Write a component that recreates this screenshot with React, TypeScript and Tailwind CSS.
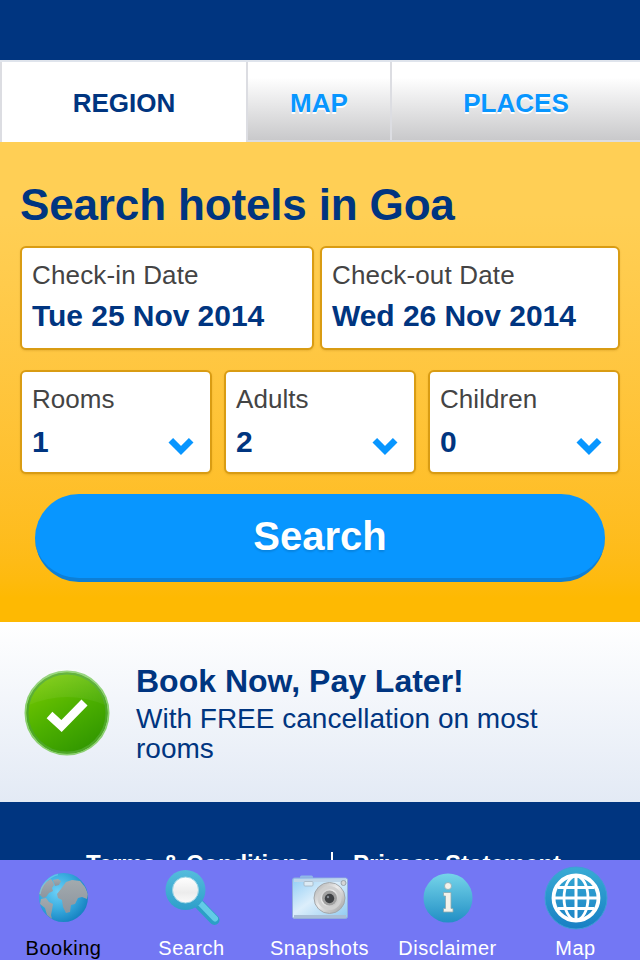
import React, { useState } from 'react';
import clsx from 'clsx';

const tabs = [
  { label: 'REGION', width: 'w-[246px]' },
  { label: 'MAP', width: 'w-[144px]' },
  { label: 'PLACES', width: 'w-[250px]' },
];

const GlobeIcon = () => (
  <svg width="64" height="64" viewBox="0 0 64 64">
    <defs>
      <radialGradient id="earth" cx="0.38" cy="0.38" r="0.68">
        <stop offset="0" stopColor="#6cd0f8" />
        <stop offset="0.5" stopColor="#3caee0" />
        <stop offset="1" stopColor="#1480c0" />
      </radialGradient>
      <linearGradient id="land" x1="0" y1="0" x2="0" y2="1">
        <stop offset="0" stopColor="#a3aaae" />
        <stop offset="1" stopColor="#8c959e" />
      </linearGradient>
      <clipPath id="earthClip">
        <circle cx="31.500" cy="31.500" r="24.500" />
      </clipPath>
    </defs>
    <circle cx="31.500" cy="31.500" r="24.500" fill="url(#earth)" />
    <g clipPath="url(#earthClip)" fill="url(#land)">
      <path d="M7 28l2-7 5-5 5-3 2 3 1 3-2 3 1 3-4 2-3 4-3 1-2-2z" />
      <path d="M21 14l5-1 3 2-2 4-4 1-1-3z" />
      <path d="M9 33l5-1 3 4 4 2-1 6-1 5 1 4-5-4-2-7-5-4z" />
      <path d="M29 23l5-7 6-2 8 1 5 6 3 7-1 5-5-2-4 1-3 6-4 1-1 7-4 1-3-6-1-7-4-2-1-4z" />
    </g>
    <path d="M8 28a24 24 0 0 1 18-19.500" stroke="#7fd4f2" strokeWidth="1.500" strokeOpacity="0.5" fill="none" />
  </svg>
);

const SearchIcon = () => (
  <svg width="64" height="64" viewBox="0 0 64 64">
    <defs>
      <linearGradient id="ring" x1="0" y1="0" x2="0" y2="1">
        <stop offset="0" stopColor="#55bcdc" />
        <stop offset="1" stopColor="#2e9fca" />
      </linearGradient>
      <linearGradient id="lens" x1="0" y1="0" x2="0" y2="1">
        <stop offset="0" stopColor="#fff" />
        <stop offset="0.6" stopColor="#ececec" />
        <stop offset="1" stopColor="#fafafa" />
      </linearGradient>
    </defs>
    <path d="M39 38l15.500 16" stroke="#2b9fc6" strokeWidth="10" strokeLinecap="round" />
    <path d="M40 37l15 15.500" stroke="#62cbe6" strokeWidth="6" strokeLinecap="round" />
    <circle cx="25.500" cy="24" r="20" fill="url(#ring)" />
    <circle cx="25.500" cy="24" r="13" fill="url(#lens)" stroke="#96d3e4" strokeWidth="1" />
  </svg>
);

const CameraIcon = () => (
  <svg width="64" height="64" viewBox="0 0 64 64">
    <defs>
      <linearGradient id="body" x1="0" y1="0" x2="1" y2="1">
        <stop offset="0" stopColor="#8fcdf5" />
        <stop offset="0.45" stopColor="#dceefb" />
        <stop offset="1" stopColor="#8fcaf0" />
      </linearGradient>
      <linearGradient id="barrel" x1="0" y1="0" x2="1" y2="1">
        <stop offset="0" stopColor="#a9a9a9" />
        <stop offset="0.45" stopColor="#ececec" />
        <stop offset="1" stopColor="#9b9b9b" />
      </linearGradient>
    </defs>
    <rect x="12" y="9.500" width="13" height="5" rx="1.500" fill="#8fb8e8" />
    <rect x="4.500" y="12" width="55" height="40.500" rx="2" fill="url(#body)" stroke="#93addb" />
    <path d="M6 14.500h52" stroke="#bdd5ea" strokeWidth="3" />
    <path d="M6 50.500h52" stroke="#a9bed6" strokeWidth="3" />
    <rect x="16" y="15.500" width="9" height="4.500" rx="1" fill="#dcebf5" stroke="#a3b3bf" strokeWidth="0.800" />
    <circle cx="55.500" cy="17" r="2.500" fill="#d5d5d5" stroke="#9aa4ad" />
    <circle cx="41.500" cy="32" r="15.500" fill="url(#barrel)" stroke="#a3a8ac" />
    <circle cx="41.500" cy="32" r="10.500" fill="none" stroke="#d0d0d0" strokeWidth="3" />
    <circle cx="41.500" cy="32" r="7.500" fill="#a0a0a0" />
    <circle cx="41.500" cy="32.500" r="4.700" fill="#3f4144" />
    <circle cx="40" cy="31" r="1.200" fill="#858b92" />
  </svg>
);

const InfoIcon = () => (
  <svg width="64" height="64" viewBox="0 0 64 64">
    <defs>
      <linearGradient id="info" x1="0" y1="0" x2="0" y2="1">
        <stop offset="0" stopColor="#75d4e9" />
        <stop offset="1" stopColor="#228fc5" />
      </linearGradient>
    </defs>
    <circle cx="32" cy="32" r="24.500" fill="url(#info)" />
    <g fill="#f4f2ea" stroke="#8aa9b0" strokeWidth="0.800">
      <circle cx="32" cy="20" r="3.500" />
      <path d="M27.500 26.500h7.500v16h2v3.500h-9.500v-3.500h2v-12.500h-2z" />
    </g>
  </svg>
);

const MapIcon = () => (
  <svg width="64" height="64" viewBox="0 0 64 64">
    <defs>
      <linearGradient id="disc" x1="0" y1="0" x2="0" y2="1">
        <stop offset="0" stopColor="#38abd4" />
        <stop offset="1" stopColor="#187fc4" />
      </linearGradient>
    </defs>
    <circle cx="32" cy="32" r="31" fill="url(#disc)" stroke="#3f9fd6" />
    <g stroke="#fff" fill="none">
      <circle cx="32" cy="32" r="22.500" strokeWidth="3.800" />
      <ellipse cx="32" cy="32" rx="12" ry="22" strokeWidth="2.800" />
      <path d="M32 10v44M10 32h44" strokeWidth="3" />
      <path d="M14 21.500h36M14 42.500h36" strokeWidth="2.800" />
    </g>
  </svg>
);

const navItems = [
  { label: 'Booking', icon: <GlobeIcon /> },
  { label: 'Search', icon: <SearchIcon /> },
  { label: 'Snapshots', icon: <CameraIcon /> },
  { label: 'Disclaimer', icon: <InfoIcon /> },
  { label: 'Map', icon: <MapIcon /> },
];

const fieldClass =
  'flex h-[104px] flex-col rounded-md border-2 border-[#d99c13] bg-white px-[10px] pt-[10px] text-left shadow-[0_1px_2px_rgba(150,100,0,0.2)]';

function DateField({ label, value, width }: { label: string; value: string; width: string }) {
  return (
    <button className={clsx(fieldClass, width)}>
      <span className="text-[26px] leading-[34px] tracking-[0.15px] text-[#444]">{label}</span>
      <span className="mt-[6px] text-[30px] leading-[36px] font-bold tracking-[-0.05px] text-[#003580]">{value}</span>
    </button>
  );
}

function CountField({ label, value }: { label: string; value: number }) {
  return (
    <button className={clsx(fieldClass, 'w-[192px]')}>
      <span className="text-[26px] leading-[34px] tracking-[0.05px] text-[#444]">{label}</span>
      <span className="mt-[8px] flex w-full items-start justify-between pr-[6px]">
        <span className="text-[30px] leading-[36px] font-bold text-[#003580]">{value}</span>
        <svg className="mt-[14px]" width="26" height="18" viewBox="0 0 26 18">
          <path d="M2.800 2.300L13 12.500L23.200 2.300" fill="none" stroke="#0896ff" strokeWidth="6.500" />
        </svg>
      </span>
    </button>
  );
}

export default function App() {
  const [activeTab, setActiveTab] = useState('REGION');
  const [activeNav, setActiveNav] = useState('Booking');

  return (
    <div className="flex h-[960px] w-[640px] flex-col overflow-hidden bg-[#003580] font-['Liberation_Sans',Arial,sans-serif]">
      <header className="h-[60px] shrink-0 bg-[#003580]" />

      <div className="flex h-[82px] shrink-0 border-t-2 border-[#dfe4ec] bg-white">
        {tabs.map((tab) => (
          <button
            key={tab.label}
            onClick={() => setActiveTab(tab.label)}
            className={clsx(
              'border-l-2 border-[#dcdde2] text-[26px] font-bold',
              tab.width,
              activeTab === tab.label
                ? 'bg-white pt-[2px] text-[#003580]'
                : 'border-b-2 bg-linear-to-b from-white from-20% to-[#c9c9cb] pt-1 text-[#0896ff] [text-shadow:0_2px_0_#fff]'
            )}
          >
            {tab.label}
          </button>
        ))}
      </div>

      <main className="h-[480px] shrink-0 bg-linear-to-b from-[#ffcf55] from-15% to-[#feb902] to-95% px-5 pt-[38px]">
        <h1 className="h-[66px] text-[44px] leading-[50px] font-bold tracking-[-0.15px] text-[#003580]">
          Search hotels in Goa
        </h1>
        <div className="flex justify-between">
          <DateField label="Check-in Date" value="Tue 25 Nov 2014" width="w-[294px]" />
          <DateField label="Check-out Date" value="Wed 26 Nov 2014" width="w-[300px]" />
        </div>
        <div className="mt-5 flex justify-between">
          <CountField label="Rooms" value={1} />
          <CountField label="Adults" value={2} />
          <CountField label="Children" value={0} />
        </div>
        <button className="mx-[15px] mt-5 h-[88px] w-[570px] rounded-full border-b-4 border-[#0d7fd6] bg-[#0896ff] text-[40px] font-bold text-white [text-shadow:0_2px_2px_rgba(0,0,0,0.12)]">
          Search
        </button>
      </main>

      <section className="flex h-[180px] shrink-0 bg-linear-to-b from-white to-[#e3eaf5] pt-[41px] pl-[23px] text-[#003580]">
        <svg className="mt-[6px] shrink-0" width="88" height="88" viewBox="0 0 88 88">
          <defs>
            <linearGradient id="green" x1="0.2" y1="0" x2="0.8" y2="1">
              <stop offset="0" stopColor="#79ca00" />
              <stop offset="0.5" stopColor="#4db000" />
              <stop offset="1" stopColor="#2d9300" />
            </linearGradient>
            <linearGradient id="gloss" x1="0" y1="0" x2="0" y2="1">
              <stop offset="0" stopColor="#fff" stopOpacity="0.14" />
              <stop offset="1" stopColor="#fff" stopOpacity="0.04" />
            </linearGradient>
          </defs>
          <circle cx="44" cy="44" r="41.500" fill="url(#green)" stroke="#8bcf70" strokeWidth="2" />
          <circle cx="44" cy="44" r="39.500" fill="none" stroke="#4fa828" strokeWidth="2" />
          <path d="M6 36a38 38 0 0 1 76 0Q44 20 6 36z" fill="url(#gloss)" />
          <path d="M26.500 46L38.500 57L61.500 33.500" fill="none" stroke="#fff" strokeWidth="8.500" />
        </svg>
        <div className="ml-[25px] w-[430px]">
          <h2 className="text-[32px] leading-[36px] font-bold">Book Now, Pay Later!</h2>
          <p className="pt-[5px] text-[28px] leading-[30px]">With FREE cancellation on most rooms</p>
        </div>
      </section>

      <footer className="flex h-[58px] shrink-0 items-start overflow-hidden pt-[48px] pl-[86px] text-[24px] leading-[28px] font-bold text-white">
        <span className="w-[245px] shrink-0 tracking-[-0.1px]">Terms &amp; Conditions</span>
        <span className="mt-[2px] h-5 w-[2px] shrink-0 bg-white" />
        <span className="ml-5 shrink-0">Privacy Statement</span>
      </footer>

      <nav className="grid h-[100px] shrink-0 grid-cols-5 bg-[#7377f4]">
        {navItems.map((item) => (
          <button
            key={item.label}
            onClick={() => setActiveNav(item.label)}
            className={clsx(
              'flex flex-col items-center pt-[6px] text-[20px] leading-6 tracking-[0.5px]',
              activeNav === item.label ? 'text-black' : 'text-white'
            )}
          >
            {item.icon}
            <span className="mt-[6px] mr-px">{item.label}</span>
          </button>
        ))}
      </nav>
    </div>
  );
}
